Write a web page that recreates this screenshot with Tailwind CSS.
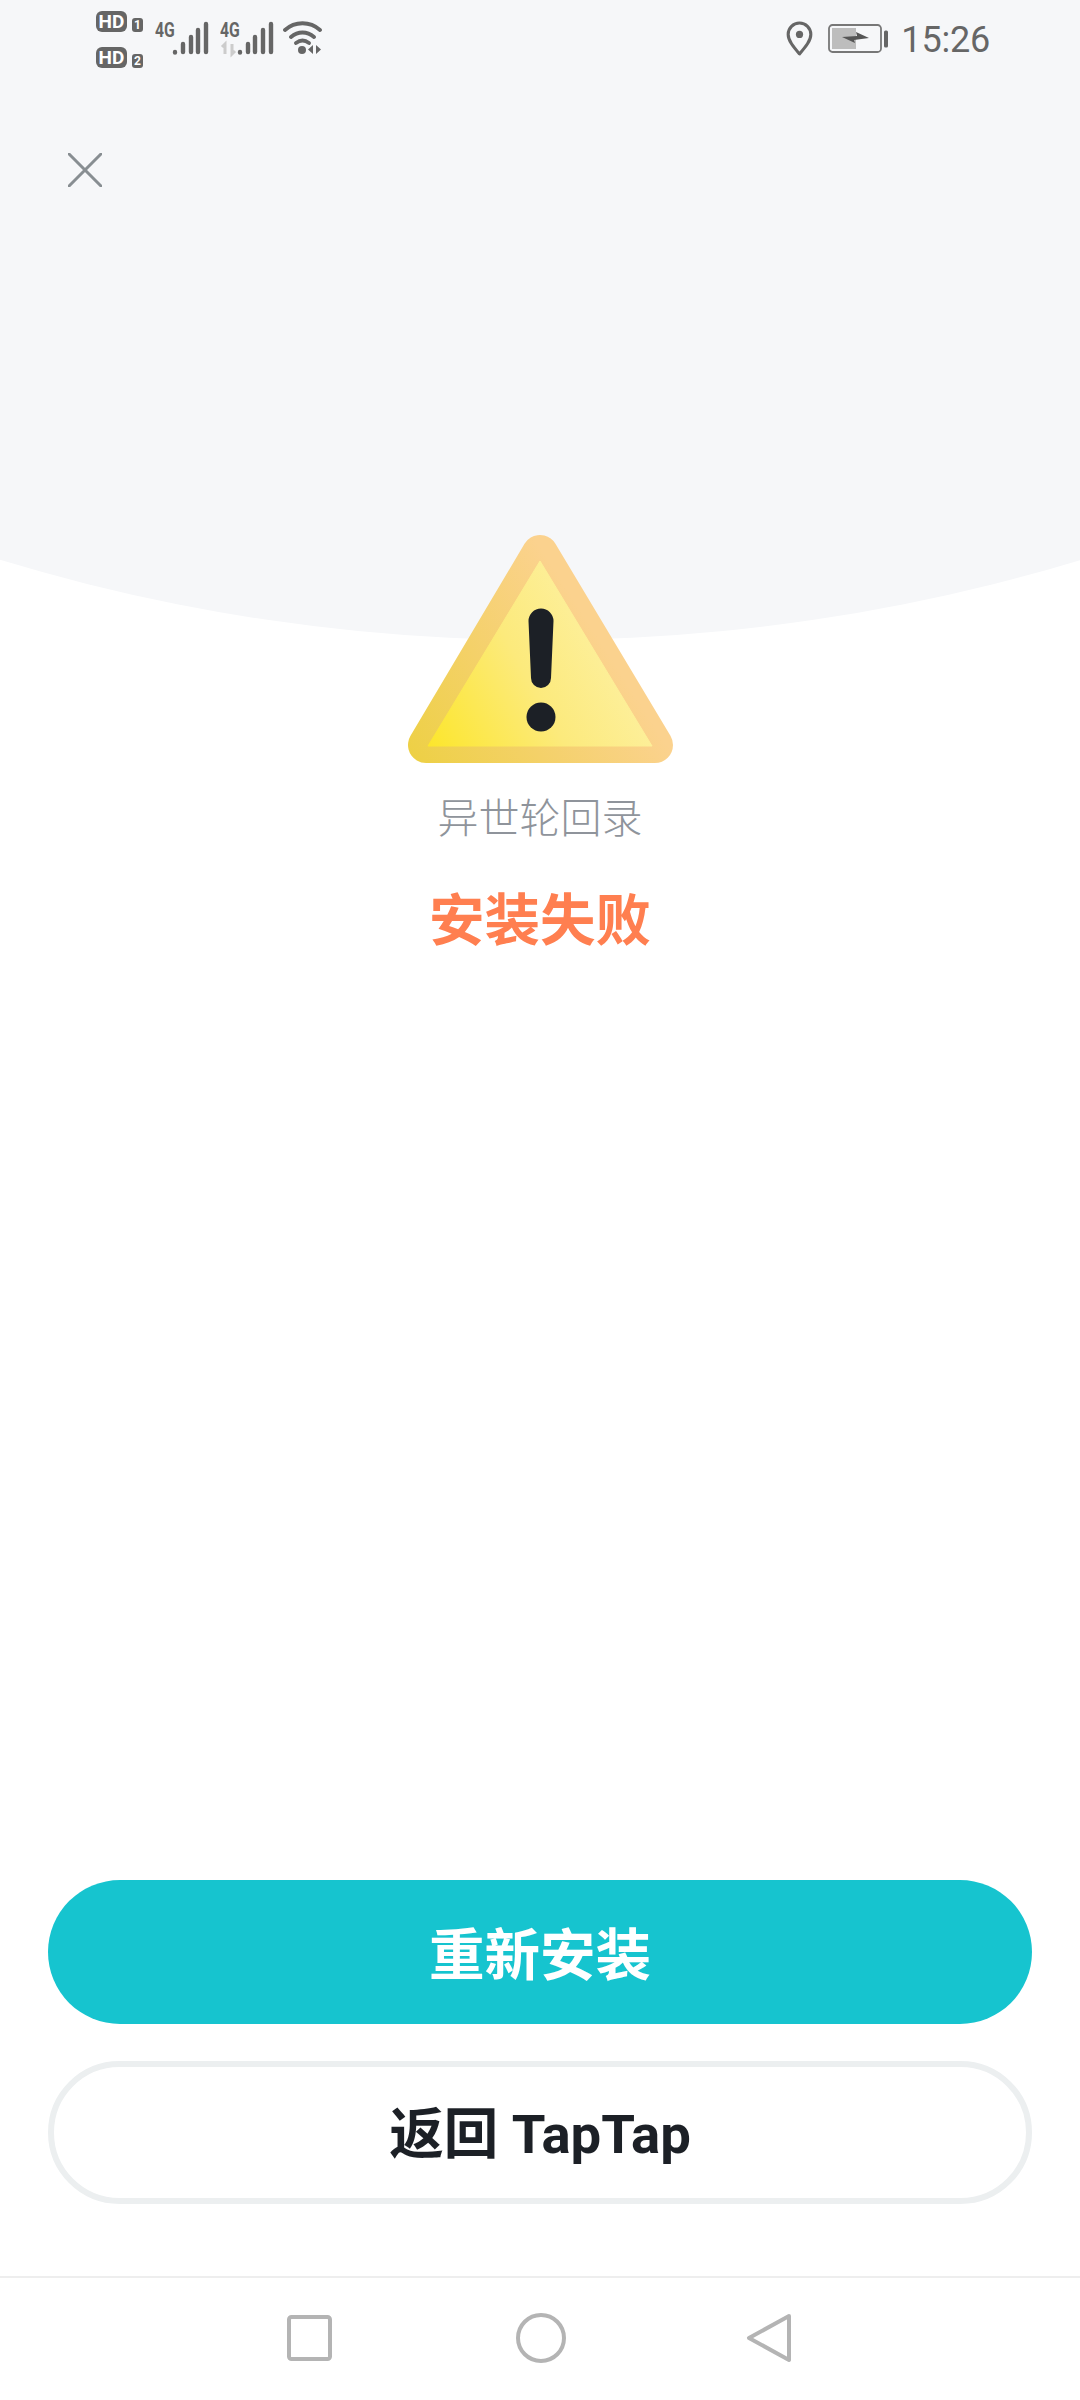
<!DOCTYPE html>
<html lang="zh">
<head>
<meta charset="utf-8">
<script src="https://cdn.jsdelivr.net/npm/@tailwindcss/browser@4"></script>
<title>安装失败</title>
</head>
<body class="bg-white">
<div class="relative w-[1080px] h-[2400px] overflow-hidden bg-white flex flex-col font-['Roboto','Noto_Sans_CJK_SC',sans-serif]">
  <!-- arc background -->
  <div class="absolute left-[-1322px] top-[-3085px] w-[3725px] h-[3725px] rounded-full bg-[#f6f7f9]"></div>

  <!-- status bar -->
  <div class="relative h-[70px] shrink-0 flex items-start pl-[96px] pr-[90px] justify-between text-[#666666]">
    <div class="flex items-start pt-[11px]">
      <div class="flex flex-col gap-[15px] w-[47px]">
        <div class="flex items-end gap-[5px]">
          <span class="w-[31px] h-[21px] rounded-[6px] bg-[#666666] text-white text-[19px] leading-[21px] font-bold text-center">HD</span>
          <span class="w-[11px] h-[14px] rounded-[3px] bg-[#666666] text-white text-[12px] leading-[14px] font-bold text-center">1</span>
        </div>
        <div class="flex items-end gap-[5px]">
          <span class="w-[31px] h-[21px] rounded-[6px] bg-[#666666] text-white text-[19px] leading-[21px] font-bold text-center">HD</span>
          <span class="w-[11px] h-[14px] rounded-[3px] bg-[#666666] text-white text-[12px] leading-[14px] font-bold text-center">2</span>
        </div>
      </div>
      <div class="relative w-[64px] h-[48px] ml-[12px]">
        <span class="absolute left-[-3px] top-[10px] w-[24px] text-center text-[21px] leading-[19px] font-bold scale-x-75">4G</span>
        <svg class="absolute left-0 top-0" width="64" height="48" viewBox="155 11 64 48" fill="none" stroke="#666666" stroke-width="4.4" stroke-linecap="round">
          <path d="M175 52v.5M183 44v8M191 37v15M198 30v22M206 24v28"/>
        </svg>
      </div>
      <div class="relative w-[63px] h-[48px]">
        <span class="absolute left-[-2px] top-[10px] w-[24px] text-center text-[21px] leading-[19px] font-bold scale-x-75">4G</span>
        <svg class="absolute left-0 top-0" width="63" height="48" viewBox="219 11 63 48" fill="none" stroke="#666666" stroke-width="4.4" stroke-linecap="round">
          <path d="M240 52v.5M248 44v8M255 37v15M263 30v22M271 24v28"/>
          <path d="M225 54V44l-3 3M232 44v10l3-3" stroke="#cccccc" stroke-width="3" stroke-linecap="butt"/>
        </svg>
      </div>
      <svg class="ml-[1px]" width="40" height="48" viewBox="283 11 40 48" fill="none">
        <path d="M285 30c10-9 25-9 35 0M291 37c7-6 16-6 23 0M296 43c4-3 9-3 13 0" stroke="#666666" stroke-width="3.8" stroke-linecap="round"/>
        <circle cx="302" cy="50" r="4" fill="#666666"/>
        <path d="M313 45v9l-5-4.500zM316 45v9l5-4.500z" fill="#666666"/>
      </svg>
    </div>
    <div class="flex items-center h-[80px]">
      <svg class="mb-[3px]" width="27" height="35" viewBox="0 0 26 34" fill="none">
        <path d="M13 32C7 25 2 19 2 13a11 11 0 0 1 22 0c0 6-5 12-11 19z" stroke="#666666" stroke-width="3" stroke-linejoin="round"/>
        <circle cx="13" cy="13" r="3.500" fill="#666666"/>
      </svg>
      <svg class="ml-[15px] mb-[3px]" width="61" height="30" viewBox="0 0 61 30" fill="none">
        <rect x="1" y="1" width="52" height="27" rx="3.5" stroke="#777777" stroke-width="1.8"/>
        <rect x="4" y="4" width="24" height="21" fill="#bdbdbd"/>
        <rect x="56" y="6.5" width="4" height="17" rx="1.5" fill="#666666"/>
        <path d="M14 13l15-1-1-4 13 6-15 2 1 3z" fill="#555555"/>
      </svg>
      <span class="ml-[12px] text-[36px] leading-[42px] tracking-[-0.2px]">15:26</span>
    </div>
  </div>

  <!-- close -->
  <div class="relative ml-[68px] mt-[83px] w-[34px] h-[34px]">
    <svg width="34" height="34" viewBox="0 0 34 34" fill="none" stroke="#888e92" stroke-width="3" stroke-linecap="round">
      <path d="M1 1l32 32M33 1L1 33"/>
    </svg>
  </div>

  <!-- warning -->
  <div class="relative flex flex-col items-center">
    <svg class="mt-[343px]" width="280" height="240" viewBox="400 530 280 240">
      <defs>
        <linearGradient id="outer" x1="408" y1="763" x2="600" y2="640" gradientUnits="userSpaceOnUse">
          <stop offset="0" stop-color="#edd043"/>
          <stop offset="1" stop-color="#fbd28e"/>
        </linearGradient>
        <linearGradient id="inner" x1="428" y1="746" x2="620" y2="640" gradientUnits="userSpaceOnUse">
          <stop offset="0" stop-color="#fce62c"/>
          <stop offset="0.55" stop-color="#fcea7c"/>
          <stop offset="1" stop-color="#fdf0a0"/>
        </linearGradient>
      </defs>
      <path d="M540 553L426 745H655Z" fill="url(#outer)" stroke="url(#outer)" stroke-width="36" stroke-linejoin="round"/>
      <path d="M540 561L428 746H652Z" fill="url(#inner)" stroke="url(#inner)" stroke-width="1" stroke-linejoin="round"/>
      <path d="M528.5 621a12.5 12.5 0 0 1 25 0l-2.500 57a10 10 0 0 1-20 0z" fill="#1c2026"/>
      <circle cx="541" cy="717" r="14.5" fill="#1c2026"/>
    </svg>
    <p class="mt-[17px] text-[41px] leading-[56px] font-light text-[#8f949b] font-['Noto_Sans_CJK_SC',sans-serif]">异世轮回录</p>
    <p class="mt-[35px] text-[55.5px] leading-[76px] font-bold text-[#ff7f50] font-['Noto_Sans_CJK_SC',sans-serif]">安装失败</p>
  </div>

  <!-- buttons -->
  <div class="relative mt-auto px-[48px] flex flex-col gap-[37px]">
    <button class="h-[144px] rounded-[72px] bg-[#16c4cf] text-white text-[55.5px] font-bold font-['Noto_Sans_CJK_SC',sans-serif]">重新安装</button>
    <button class="h-[143px] rounded-[72px] border-[6px] border-[#eceff0] bg-white pt-[4px] text-[#1c2026] text-[54.5px] font-bold">返回 TapTap</button>
  </div>

  <!-- nav bar -->
  <div class="relative mt-[72px] h-[124px] border-t-[2px] border-[#eeeeee] flex items-center pl-[287px] pb-[2px]">
    <svg width="45" height="46" viewBox="0 0 45 46" fill="none"><rect x="2" y="2" width="41" height="42" rx="2.5" stroke="#b4b4b4" stroke-width="4"/></svg>
    <svg class="ml-[184px]" width="50" height="50" viewBox="0 0 50 50" fill="none"><circle cx="25" cy="25" r="23" stroke="#b4b4b4" stroke-width="4"/></svg>
    <svg class="ml-[180px]" width="46" height="50" viewBox="0 0 46 50" fill="none"><path d="M43 3L3 25l40 22z" stroke="#b4b4b4" stroke-width="4" stroke-linejoin="round"/></svg>
  </div>
</div>
</body>
</html>
